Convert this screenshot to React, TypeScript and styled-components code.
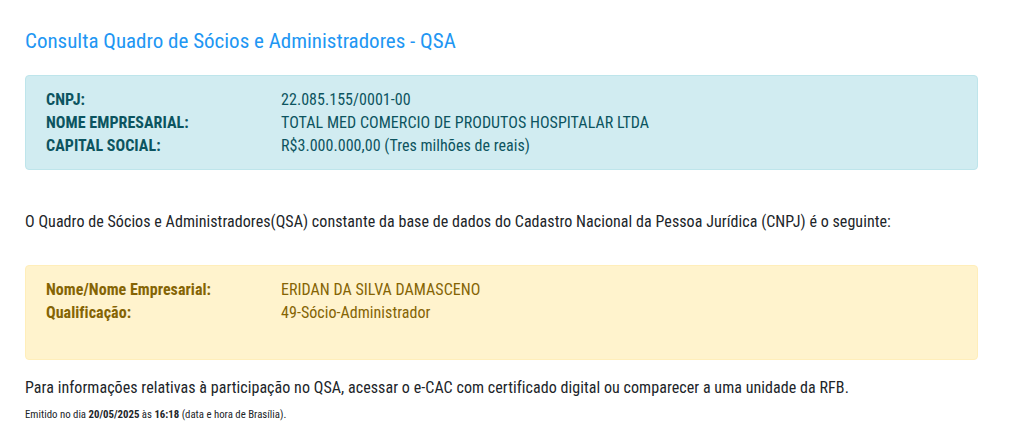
import React from "react";
import styled, { createGlobalStyle } from "styled-components";

const Global = createGlobalStyle`
  html, body { margin: 0; padding: 0; background: #fff; }
  body { font-family: "Roboto Condensed", Roboto, "Liberation Sans", sans-serif; color: #212529; }
`;

const Page = styled.div`
  padding: 27px 36px 0 25px;
  display: flex;
  flex-direction: column;
`;

const Title = styled.h1`
  margin: 0 0 20px 0;
  font-size: 21px;
  font-weight: 400;
  line-height: 28px;
  color: #2196f3;
`;

const Alert = styled.div<{ $tone: "info" | "warning" }>`
  border-radius: 4px;
  border: 1px solid ${(p) => (p.$tone === "info" ? "#bee5eb" : "#ffeeba")};
  background: ${(p) => (p.$tone === "info" ? "#d1ecf1" : "#fff3cd")};
  color: ${(p) => (p.$tone === "info" ? "#0c5460" : "#856404")};
  padding: ${(p) => (p.$tone === "info" ? "12px 20px 12px" : "12px 20px 35px")};
`;

const Row = styled.div`
  display: grid;
  grid-template-columns: 235px 1fr;
  font-size: 16px;
  line-height: 23px;
  letter-spacing: 0.04px;
`;

const Label = styled.span`
  font-weight: 700;
`;

const Value = styled.span``;

const Para = styled.p<{ $top: number; $bottom: number }>`
  margin: ${(p) => p.$top}px 0 ${(p) => p.$bottom}px 0;
  font-size: 16px;
  letter-spacing: 0.06px;
  line-height: 22px;
  color: #212529;
`;

const Small = styled.p`
  margin: 9px 0 0 0;
  font-size: 10.8px;
  line-height: 14px;
  color: #212529;
`;

export default function App() {
  return (
    <>
      <Global />
      <Page>
        <Title>Consulta Quadro de Sócios e Administradores - QSA</Title>
        <Alert $tone="info">
          <Row><Label>CNPJ:</Label><Value>22.085.155/0001-00</Value></Row>
          <Row><Label>NOME EMPRESARIAL:</Label><Value>TOTAL MED COMERCIO DE PRODUTOS HOSPITALAR LTDA</Value></Row>
          <Row><Label>CAPITAL SOCIAL:</Label><Value>R$3.000.000,00 (Tres milhões de reais)</Value></Row>
        </Alert>
        <Para $top={41} $bottom={32}>
          O Quadro de Sócios e Administradores(QSA) constante da base de dados do Cadastro Nacional da Pessoa Jurídica (CNPJ) é o seguinte:
        </Para>
        <Alert $tone="warning">
          <Row><Label>Nome/Nome Empresarial:</Label><Value>ERIDAN DA SILVA DAMASCENO</Value></Row>
          <Row><Label>Qualificação:</Label><Value>49-Sócio-Administrador</Value></Row>
        </Alert>
        <Para $top={17} $bottom={0}>
          Para informações relativas à participação no QSA, acessar o e-CAC com certificado digital ou comparecer a uma unidade da RFB.
        </Para>
        <Small>
          Emitido no dia <b>20/05/2025</b> às <b>16:18</b> (data e hora de Brasília).
        </Small>
      </Page>
    </>
  );
}
